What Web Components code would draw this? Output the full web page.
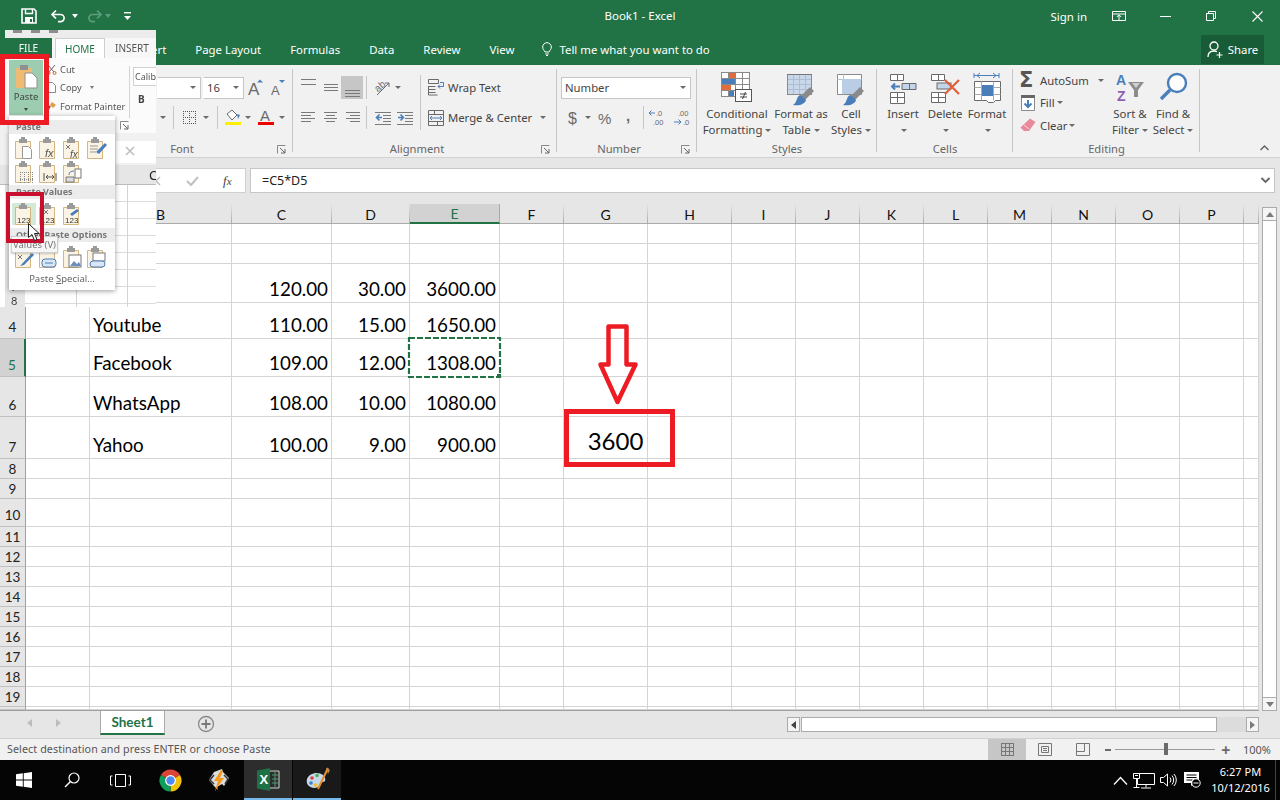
<!DOCTYPE html>
<html lang="en">
<head>
<meta charset="utf-8">
<title>Book1 - Excel</title>
<style>
  html, body { margin: 0; padding: 0; }
  body { width: 1280px; height: 800px; overflow: hidden; position: relative; background: #fff; font: 12px "Noto Sans", "Open Sans", sans-serif; color: #444; }
</style>
</head>
<body>
<xl-title></xl-title>
<xl-tabs></xl-tabs>
<xl-ribbon>
  <xl-group width="87"></xl-group>
  <xl-group width="206" label="Font" launcher>
    <xl-row end>
      <xl-combo w="44" style="margin-right:2px"></xl-combo>
      <xl-combo w="41" style="margin-right:1px">16</xl-combo>
      <xl-tool w="22" icon="grow"></xl-tool>
      <xl-tool w="22" icon="shrink" style="margin-right:4px"></xl-tool>
    </xl-row>
    <xl-row end>
      <xl-tool w="10" caret></xl-tool>
      <xl-sep style="margin:0 5px"></xl-sep>
      <xl-tool w="20" icon="borders"></xl-tool>
      <xl-tool w="10" caret style="margin:0 6px 0 2px"></xl-tool>
      <xl-sep style="margin-right:5px"></xl-sep>
      <xl-tool w="20" icon="fillcolor"></xl-tool>
      <xl-tool w="10" caret style="margin-right:3px"></xl-tool>
      <xl-tool w="20" icon="fontcolor"></xl-tool>
      <xl-tool w="11" caret style="margin-right:6px"></xl-tool>
    </xl-row>
  </xl-group>
  <xl-group width="264" label="Alignment" launcher row>
    <div style="width:123px;padding:4px 0 0 4px;box-sizing:border-box">
      <xl-row>
        <xl-tool w="22" icon="atop"></xl-tool>
        <xl-tool w="22" icon="amid"></xl-tool>
        <xl-tool w="22" icon="abot" active></xl-tool>
        <xl-sep style="margin:0 6px 0 3px"></xl-sep>
        <xl-tool w="20" icon="orient"></xl-tool>
        <xl-tool w="10" caret></xl-tool>
      </xl-row>
      <xl-row>
        <xl-tool w="22" icon="aleft"></xl-tool>
        <xl-tool w="22" icon="acenter"></xl-tool>
        <xl-tool w="22" icon="aright"></xl-tool>
        <xl-sep style="margin:0 5px 0 3px"></xl-sep>
        <xl-tool w="22" icon="outdent"></xl-tool>
        <xl-tool w="22" icon="indent"></xl-tool>
      </xl-row>
    </div>
    <xl-sep tall style="margin:10px 5px 0 4px"></xl-sep>
    <div style="padding-top:4px">
      <xl-row><xl-tool w="20" icon="wrap" style="margin-right:2px"></xl-tool><span>Wrap Text</span></xl-row>
      <xl-row><xl-tool w="20" icon="merge" style="margin-right:2px"></xl-tool><span>Merge &amp; Center</span><xl-tool w="10" caret style="margin-left:6px"></xl-tool></xl-row>
    </div>
  </xl-group>
  <xl-group width="140" label="Number" launcher>
    <xl-row style="padding-left:4px"><xl-combo w="130" text>Number</xl-combo></xl-row>
    <xl-row style="padding-left:6px">
      <xl-tool w="20" icon="dollar"></xl-tool>
      <xl-tool w="10" caret style="margin-right:3px"></xl-tool>
      <xl-tool w="20" icon="percent" style="margin-right:2px"></xl-tool>
      <xl-tool w="20" icon="comma"></xl-tool>
      <xl-sep style="margin:0 1px 0 5px"></xl-sep>
      <xl-tool w="24" icon="incdec" style="margin-right:1px"></xl-tool>
      <xl-tool w="24" icon="decdec"></xl-tool>
    </xl-row>
  </xl-group>
  <xl-group width="180" label="Styles" row pad="6">
    <xl-big w="68" icon="cond" caret>Conditional<br>Formatting</xl-big>
    <xl-big w="60" icon="table" caret>Format as<br>Table</xl-big>
    <xl-big w="40" icon="cellstyle" caret>Cell<br>Styles</xl-big>
  </xl-group>
  <xl-group width="136" label="Cells" row pad="5">
    <xl-big w="42" icon="insert" caret>Insert<br></xl-big>
    <xl-big w="42" icon="delete" caret>Delete<br></xl-big>
    <xl-big w="42" icon="format" caret>Format<br></xl-big>
  </xl-group>
  <xl-group width="187" label="Editing" row pad="5">
    <div style="width:90px;margin-top:4px">
      <xl-row slim><xl-tool w="20" icon="sum" style="margin-right:2px"></xl-tool><span>AutoSum</span><xl-tool w="10" caret style="margin-left:7px"></xl-tool></xl-row>
      <xl-row slim><xl-tool w="20" icon="fill" style="margin-right:2px"></xl-tool><span>Fill</span><xl-tool w="10" caret></xl-tool></xl-row>
      <xl-row slim><xl-tool w="20" icon="clear" style="margin-right:2px"></xl-tool><span>Clear</span><xl-tool w="10" caret></xl-tool></xl-row>
    </div>
    <xl-big w="44" icon="sort" caret>Sort &amp;<br>Filter</xl-big>
    <xl-big w="42" icon="find" caret>Find &amp;<br>Select</xl-big>
  </xl-group>
</xl-ribbon>
<xl-formula>=C5*D5</xl-formula>
<xl-sheet></xl-sheet>
<xl-sheetbar></xl-sheetbar>
<xl-status>Select destination and press ENTER or choose Paste</xl-status>
<xl-taskbar></xl-taskbar>
<xl-paste-shot></xl-paste-shot>
<xl-mark x="564" y="409" w="111" h="58" color="#ed1c24" size="5"><span>3600</span></xl-mark>
<xl-arrow></xl-arrow>
<xl-mark x="0" y="54" w="49" h="71" color="#ed1c24" size="5"></xl-mark>
<xl-mark x="6" y="192" w="38" h="51" color="#c8102e" size="4"></xl-mark>
<xl-cursor></xl-cursor>

<script>
const GREY = '#6a6a6a', BLUE = '#4a7ebb', LINE = '#7a7a7a';
const hl = (y, a, b, c) => `<path d="M${a} ${y}.5H${b}" stroke="${c || LINE}" fill="none"/>`;
const vt = (x, a, b, c) => `<path d="M${x}.5 ${a}V${b}" stroke="${c || LINE}" fill="none"/>`;
const tx = (x, y, s, size, fill, extra) => `<text x="${x}" y="${y}" font-size="${size}" fill="${fill}" font-family="Liberation Sans, sans-serif" ${extra || ''}>${s}</text>`;
const grid = (x, y, cols, rows, w, h, c) => {
  let out = '';
  for (let i = 0; i <= cols; i++) out += vt(x + i * w, y, y + rows * h + 1, c);
  for (let i = 0; i <= rows; i++) out += hl(y + i * h, x, x + cols * w + 1, c);
  return out;
};
const brush = (x, y) => `<path d="M${x + 17} ${y}l4 4-9 9-4-4z" fill="#8a8a8a"/><path d="M${x + 8} ${y + 8}l5 5c-1 4-6 6-13 5 3-2 3-4 4-6 1-3 2-4 4-4z" fill="#4a7ebb"/>`;
const clipboard = (inner) => `<path d="M3.500 4.500h15v17h-15z" fill="#fbf4e4" stroke="#d3b681"/><rect x="7" y="2" width="8" height="4" fill="#9a9a9a"/><rect x="9" y="0" width="4" height="3" fill="#9a9a9a"/>${inner || ''}`;

const ICONS = {
  save: [16, 16, `<path d="M1 1h12l2 2v12H1z" fill="none" stroke="#fff" stroke-width="1.6"/><path d="M4.5 1v4.5h7V1" fill="none" stroke="#fff" stroke-width="1.4"/><rect x="4" y="9" width="8" height="6" fill="#fff"/><rect x="9" y="11" width="2" height="3" fill="#217346"/>`],
  undo: [16, 14, `<path d="M6 1.5L2 5.5l4 4M2 5.5h8.5a3.6 3.6 0 0 1 0 7.2H8" fill="none" stroke="#fff" stroke-width="1.7"/>`],
  redo: [16, 14, `<path d="M10 1.5l4 4-4 4M14 5.5H5.5a3.6 3.6 0 0 0 0 7.2H8" fill="none" stroke="#5d9d7b" stroke-width="1.7"/>`],
  custom: [7, 8, `<rect width="7" height="1.4" fill="#fff"/><path d="M0 4h7L3.5 8z" fill="#fff"/>`],
  display: [14, 10, `<path d="M.5.5h13v9H.5zM.5 3h13" fill="none" stroke="#fff"/><path d="M7 9V4M4.8 6L7 3.8 9.2 6" fill="none" stroke="#fff"/>`],
  min: [11, 1, `<rect width="11" height="1" fill="#fff"/>`],
  restore: [10, 10, `<path d="M.5 2.5h7v7h-7zM2.5 2.5v-2h7v7h-2" fill="none" stroke="#fff"/>`],
  close: [11, 11, `<path d="M.5.5l10 10M10.5.5l-10 10" stroke="#fff" stroke-width="1.1"/>`],
  share: [16, 17, `<circle cx="7" cy="5" r="4" fill="none" stroke="#fff" stroke-width="1.3"/><path d="M1 16c0-4 2-6 6-6 1 0 2 .2 3 .6" fill="none" stroke="#fff" stroke-width="1.3"/><path d="M12.5 11v6M9.5 14h6" stroke="#fff" stroke-width="1.2"/>`],
  bulb: [10, 14, `<path d="M3 10C2 8 .7 7.4.7 5a4.3 4.3 0 0 1 8.6 0c0 2.4-1.3 3-2.3 5zM3.3 12h3.4M4 13.5h2" fill="none" stroke="#fff"/>`],
  grow: [18, 23, `${tx(1, 19, 'A', 17, GREY)}<path d="M10 6.5l3-3 3 3z" fill="${BLUE}"/>`],
  shrink: [18, 23, `${tx(2, 19, 'A', 13, GREY)}<path d="M10 4h6l-3 3z" fill="${BLUE}"/>`],
  borders: [14, 23, `<g stroke-dasharray="1 1">${grid(1, 5, 2, 2, 6, 6, '#555')}</g>`],
  fillcolor: [18, 23, `<path d="M3 8l5-4 5 5-5 5z" fill="#fff" stroke="${GREY}"/><path d="M13 8l3 1-2 4z" fill="${BLUE}"/><rect x="1" y="16" width="16" height="3" fill="#ffef00"/>`],
  fontcolor: [18, 23, `${tx(3, 15, 'A', 15, GREY)}<rect x="1" y="16" width="16" height="3" fill="#e00"/>`],
  atop: [15, 23, hl(3, 0, 15) + hl(8, 0, 15)],
  amid: [15, 23, hl(8, 1, 15) + hl(11, 1, 15) + hl(14, 1, 15)],
  abot: [15, 23, hl(14, 0, 15) + hl(17, 0, 15) + hl(20, 0, 15)],
  aleft: [15, 23, hl(6, 0, 14) + hl(9, 0, 10) + hl(12, 0, 14) + hl(15, 0, 10)],
  acenter: [15, 23, hl(6, 1, 14) + hl(9, 3, 12) + hl(12, 1, 14) + hl(15, 3, 12)],
  aright: [15, 23, hl(6, 1, 15) + hl(9, 5, 15) + hl(12, 1, 15) + hl(15, 5, 15)],
  orient: [18, 23, `${tx(1, 13, 'ab', 10, GREY, 'transform="rotate(-40 7 11)"')}<path d="M3 19L15 7M11 7h4v4" fill="none" stroke="${GREY}"/>`],
  outdent: [16, 23, `${hl(6, 0, 16)}${hl(9, 8, 16)}${hl(12, 8, 16)}${hl(15, 8, 16)}${hl(18, 0, 16)}<path d="M7 11.5H2M4.5 8.5l-3 3 3 3" fill="none" stroke="${BLUE}" stroke-width="1.6"/>`],
  indent: [16, 23, `${hl(6, 0, 16)}${hl(9, 8, 16)}${hl(12, 8, 16)}${hl(15, 8, 16)}${hl(18, 0, 16)}<path d="M1 11.5h5M3.5 8.5l3 3-3 3" fill="none" stroke="${BLUE}" stroke-width="1.6"/>`],
  wrap: [17, 17, `<path d="M.5.5h10v4H.5zM.5 7.5h7M.5 10.5h7M.5 13.5h7M.5 7v9h9" fill="none" stroke="${GREY}"/><path d="M12 3.5h3.5v4H10M12 5.5l-2 2 2 2" fill="none" stroke="${BLUE}"/>`],
  merge: [16, 16, `<path d="M.5.5h15v15H.5zM.5 4.5h15M.5 11.5h15M6.5.5v4M9.5 11.5v4" fill="none" stroke="${GREY}"/><path d="M2 8h12M4 6L2 8l2 2M12 6l2 2-2 2" fill="none" stroke="${BLUE}"/>`],
  dollar: [12, 23, tx(1, 18, '$', 16, GREY)],
  percent: [16, 23, tx(0, 18, '%', 15, GREY)],
  comma: [10, 23, tx(3, 15, ',', 15, GREY, 'font-weight="700"')],
  incdec: [18, 23, `${tx(8, 10, '.0', 7.500, GREY)}${tx(5, 19, '.00', 7.500, GREY)}<path d="M7 7H1M3.500 4.500L1 7l2.500 2.500" fill="none" stroke="${BLUE}"/>`],
  decdec: [18, 23, `${tx(5, 10, '.00', 7.500, GREY)}${tx(10, 19, '.0', 7.500, GREY)}<path d="M1 16h7M5.500 13.500L8 16l-2.500 2.500" fill="none" stroke="${BLUE}"/>`],
  cond: [32, 31, `<path d="M.5.5h27v24H.5z" fill="#fff"/>${grid(0, 0, 4, 4, 7, 6, '#8a8a8a')}<rect x="8" y="1" width="6" height="5" fill="#e06b3d"/><rect x="1" y="7" width="13" height="5" fill="${BLUE}"/><rect x="1" y="13" width="9" height="5" fill="#e06b3d"/><rect x="8" y="19" width="5" height="5" fill="${BLUE}"/><rect x="14.5" y="17.5" width="16" height="12" fill="#fff" stroke="#555"/><path d="M19 22h7M19 25h7M24.500 20l-3 7" stroke="#444" fill="none"/>`],
  table: [30, 32, `${grid(1, 2, 4, 4, 6, 5, '#8a8a8a')}<rect x="2" y="3" width="23" height="19" fill="#b9cde5" opacity=".75"/>${hl(2, 1, 26, '#777')}${brush(7, 15)}`],
  cellstyle: [30, 32, `<path d="M1.500 2.500h24v20h-24z" fill="#fff" stroke="#8a8a8a"/><path d="M1.500 7.500h24M7.500 2.500v20" stroke="#c0c0c0" fill="none"/><rect x="6" y="7" width="19" height="15" fill="#b9cde5"/>${brush(7, 15)}`],
  insert: [28, 29, `<path d="M1.500 1.500h13v6h-13zM8.500 1.500v6M1.500 19.500h14v11h-14z" fill="#fff" stroke="${GREY}"/><path d="M1.500 24.500h14M8.500 19.500v10" stroke="${GREY}"/><path d="M13 10.500h14v6H13zM20.500 10.500v6" fill="#c3d5ea" stroke="${GREY}"/><path d="M11 13.500H3M6 10.500l-3 3 3 3" fill="none" stroke="${BLUE}" stroke-width="2"/>`],
  delete: [30, 29, `<path d="M1.500 1.500h13v6h-13zM8.500 1.500v6M1.500 19.500h14v10h-14zM1.500 24.500h14M8.500 19.500v10" fill="#fff" stroke="${GREY}"/><rect x="7" y="10" width="14" height="6" fill="#c3d5ea" stroke="${GREY}"/><path d="M15 7l14 14M29 7L15 21" stroke="#e0603a" stroke-width="2.200"/>`],
  format: [28, 31, `<path d="M1 3.500h25M1 1v5M26 1v5M4 3.500l3-2.500M4 3.500l3 2.500M23 3.500L20 1M23 3.500l-3 2.500" stroke="${BLUE}" fill="none"/><path d="M1.500 9.500h26v19h-5l-2 2h-5l-2-2h-12z" fill="#fff" stroke="${GREY}"/><path d="M1.500 15.500h26M1.500 22.500h26M8.500 9.500v19M20.500 9.500v19" stroke="#aaa" fill="none"/><rect x="9" y="13" width="11" height="11" fill="${BLUE}"/>`],
  sum: [20, 20, `<text x="1" y="17" font-size="21" fill="#555" font-weight="700" font-family="DejaVu Sans, sans-serif">Σ</text>`],
  fill: [15, 16, `<rect x="0" y="0" width="14" height="3" fill="#666"/><path d="M.5 .5h13v15H.5z" fill="#fff" stroke="#8a8a8a"/><rect x="0" y="0" width="14" height="3" fill="#666"/><path d="M7 5v7M3.500 8.500L7 12l3.500-3.500" fill="none" stroke="${BLUE}" stroke-width="2"/>`],
  clear: [16, 14, `<path d="M10 .5L15.500 4 9 13H4L.5 9.500z" fill="#e98a9a"/><path d="M3 6l6 5" stroke="#f6d4da"/>`],
  sort: [30, 31, `${tx(1, 13, 'A', 14, BLUE, 'font-weight="700"')}${tx(2, 29, 'Z', 14, '#8d5fb3', 'font-weight="700"')}<path d="M13 10h16l-6 8v7h-4v-7z" fill="#8c8c8c"/><path d="M17 11h8l-4 5z" fill="#cfcfcf"/>`],
  find: [30, 31, `<circle cx="19" cy="11" r="9" fill="#fff" stroke="${BLUE}" stroke-width="2.400"/><path d="M12 18L3 27" stroke="${BLUE}" stroke-width="3.400"/>`],
  launcher: [9, 9, `<path d="M.5 .5h8M.5 .5v8" stroke="#8a8a8a" fill="none"/><path d="M3 3l5 5M8 4v4H4" stroke="#666" fill="none"/>`],
  collapse: [9, 6, `<path d="M.5 5L4.500 1 8.500 5" stroke="#666" fill="none" stroke-width="1.500"/>`],
  chevron: [9, 6, `<path d="M.5 1l4 4 4-4" stroke="#666" fill="none" stroke-width="1.800"/>`],
  check: [13, 11, `<path d="M1 6l4 4 7-8" stroke="#c0c0c0" fill="none" stroke-width="2"/>`],
  cross: [10, 10, `<path d="M1 1l8 8M9 1L1 9" stroke="#bdbdbd" stroke-width="1.500"/>`],
  plus: [18, 18, `<circle cx="9" cy="9" r="7.500" fill="none" stroke="#8a8a8a" stroke-width="1.300"/><path d="M9 4.500v9M4.500 9h9" stroke="#777" stroke-width="1.800"/>`],
  normal: [13, 13, grid(0, 0, 3, 3, 4, 4, '#777')],
  page: [14, 13, `<path d="M.5.5h13v12H.5z" fill="none" stroke="#777"/><path d="M3.500 3.500h7v6h-7zM5 5.500h4M5 7.500h4" fill="none" stroke="#777"/>`],
  pbreak: [14, 13, `<path d="M.5.5h13v12H.5zM.5 8.500h8v-8" fill="none" stroke="#777"/>`],
  win: [16, 16, `<path d="M0 2.300L6.800 1.300V7.600H0zM7.700 1.200L16 0V7.600H7.700zM0 8.400H6.800V14.700L0 13.700zM7.700 8.400H16V16L7.700 14.800z" fill="#fff"/>`],
  search: [16, 16, `<circle cx="10" cy="6" r="5" fill="none" stroke="#fff" stroke-width="1.200"/><path d="M6.500 9.500L1 15" stroke="#fff" stroke-width="1.400"/>`],
  taskview: [21, 13, `<path d="M5.500.5h10v12h-10zM2.500 2H.5v9h2M18.500 2h2v9h-2" fill="none" stroke="#fff"/>`],
  chrome: [23, 23, `<g transform="translate(-.5 -.5)"><path d="M12 12L2.470 6.500A11 11 0 0 1 21.530 6.500Z" fill="#db4437"/><path d="M12 12L21.530 6.500A11 11 0 0 1 12 23Z" fill="#f4c20d"/><path d="M12 12L12 23A11 11 0 0 1 2.470 6.500Z" fill="#0f9d58"/><circle cx="12" cy="12" r="5.400" fill="#fff"/><circle cx="12" cy="12" r="4.200" fill="#4c8bf5"/></g>`],
  winamp: [20, 23, `<path d="M5 3l8-3 1 3 6 6-5 8-2-2-5 3 1 3-4-4-5-6z" fill="#ddd"/><path d="M12 1L5 12h4l-3 10 9-13h-4l3-7z" fill="#f39a1e"/><path d="M5 6L1 11l4 4M15 6l4 4-3 5" fill="none" stroke="#333" stroke-width="1.500"/>`],
  excel: [23, 23, `<path d="M0 2.500L13 0V23L0 20.500z" fill="#1e7145"/><path d="M13 3h9v17h-9" fill="none" stroke="#c9d9d0"/><path d="M15 7h6M15 11h6M15 15h6M18 4v15" stroke="#4f9a72" fill="none"/>${tx(2.500, 16, 'X', 13, '#fff', 'font-weight="700"')}`],
  paint: [25, 25, `<path d="M2 12C4 6 13 4 18 8c3 3 3 7 0 7-3 0-3 3-5 5C8 23 0 19 2 12z" fill="#c6d9ea"/><circle cx="7" cy="11" r="1.800" fill="#d8423a"/><circle cx="12" cy="8.500" r="1.800" fill="#4cae4f"/><circle cx="6" cy="16" r="1.800" fill="#3d7fd1"/><circle cx="10.500" cy="18" r="1.800" fill="#f0c02f"/><path d="M23 1L13 22" stroke="#e58e2b" stroke-width="2"/><path d="M21 1l4 2-2 4z" fill="#b98a4c"/>`],
  up: [15, 9, `<path d="M1 8.500L7.500 1.500l6.500 7" stroke="#fff" fill="none" stroke-width="1.300"/>`],
  net: [23, 17, `<path d="M4.500 1.500h17v11h-17zM13 12.500v3M8 16h10" fill="none" stroke="#fff"/><path d="M.5 1.500h6v5h-6zM3.500 6.500v9M.5 15.500h6" fill="#000" stroke="#fff"/><path d="M2 3.500h3" stroke="#fff"/>`],
  vol: [16, 14, `<path d="M.5 4.500h3l4-3.500v12l-4-3.500h-3z" fill="none" stroke="#fff"/><path d="M10 4.500a4 4 0 0 1 0 5M12 2.500a7 7 0 0 1 0 9M14 1a9 9 0 0 1 0 12" fill="none" stroke="#fff"/>`],
  action: [17, 16, `<path d="M0 0h15v11h-4l-4 3v-3H0z" fill="#fff"/><path d="M2.500 3h10M2.500 5.500h10M2.500 8h6" stroke="#000"/><circle cx="12" cy="11" r="4.200" fill="#000" stroke="#fff"/><path d="M9.500 11h5" stroke="#fff"/>`],
};
const PASTE_ICONS = {
  p1: clipboard(`<path d="M10.500 9.500h6l3 3v9h-9z" fill="#fff" stroke="#999"/>`),
  p2: clipboard(tx(9, 20, 'fx', 11, '#555', 'font-style="italic"')),
  p3: clipboard(`<path d="M6 8l4 4M6 12l4-4" stroke="#777"/>${tx(10, 21, 'fx', 10, '#555', 'font-style="italic"')}`),
  p4: clipboard(`<path d="M6 9h8M6 12h8M6 15h6" stroke="#999"/><path d="M21 6l2 2-8 9-3-2z" fill="#4a7ebb"/>`),
  p5: clipboard(`<g stroke-dasharray="1 1">${grid(8, 11, 3, 3, 4, 3.500, '#888')}</g>`),
  p6: clipboard(`<path d="M8 12v8M20 12v8M10 16h8M12 14l-2 2 2 2M16 14l2 2-2 2" stroke="#555" fill="none"/>`),
  p7: clipboard(`<path d="M6 16h8v5H6z" fill="#ddd" stroke="#777"/><rect x="15" y="8" width="6" height="9" fill="#fff" stroke="#777"/><path d="M9 14c0-3 2-4 5-4" stroke="#4a7ebb" fill="none"/>`),
  v1: clipboard(tx(5, 20, '123', 8, '#333')),
  v2: clipboard(`<path d="M8 7l4 4M8 11l4-4" stroke="#777"/>${tx(5, 20, '123', 8, '#333')}`),
  v3: clipboard(`<path d="M17 6l2 2-7 5-2-2z" fill="#4a7ebb"/>${tx(5, 20, '123', 8, '#333')}`),
  o1: clipboard(`<path d="M6 9l4 4M6 13l4-4" stroke="#777"/><path d="M20 7l2 2-10 10-4 1z" fill="#4a7ebb"/>`),
  o2: clipboard(`<rect x="6" y="13" width="14" height="8" rx="3" fill="#dbe6f3" stroke="#4a7ebb"/><path d="M9 17h8" stroke="#4a7ebb"/>`),
  o3: clipboard(`<rect x="9" y="9" width="12" height="12" fill="#fff" stroke="#777"/><path d="M10 20l4-5 3 3 2-2 2 4z" fill="#6c8ebf"/>`),
  o4: clipboard(`<rect x="9" y="7" width="12" height="8" fill="#fff" stroke="#777"/><rect x="6" y="15" width="15" height="6" rx="3" fill="#dbe6f3" stroke="#4a7ebb"/>`),
};

class XlElement extends HTMLElement {
  connectedCallback() {
    if (!this.shadowRoot) this.attachShadow({ mode: 'open' });
    this.shadowRoot.innerHTML = this.render();
  }
  num(name, fallback) {
    return this.hasAttribute(name) ? Number(this.getAttribute(name)) : fallback;
  }
}

class XlIcon extends XlElement {
  render() {
    const name = this.getAttribute('name');
    const [w, h, body] = ICONS[name] || [22, 22, PASTE_ICONS[name]];
    const vb = ICONS[name] ? `0 0 ${w} ${h}` : '0 0 24 22';
    const dw = ICONS[name] ? w : 24;
    return `<style>:host{display:inline-flex;line-height:0}svg{overflow:visible}</style>
      <svg width="${dw}" height="${h}" viewBox="${vb}">${body}</svg>`;
  }
}

class XlTitle extends XlElement {
  render() {
    return `<style>
      :host{display:grid;grid-template-columns:1fr auto 1fr;height:35px;background:#217346;color:#fff;font-size:11.500px}
      .qat{display:flex;align-items:center;padding-left:21px;height:32px}
      .right{display:flex;justify-content:flex-end;align-items:center;height:32px}
      .btn{width:46px;height:32px;display:flex;align-items:center;justify-content:center}
      .in{margin-right:9px}
      .title{line-height:32px}
      .car{width:0;height:0;border:3px solid transparent;border-top:4px solid #fff;border-bottom:0}
      .dim{border-top-color:#5d9d7b}
    </style>
    <div class="qat">
      <xl-icon name="save" style="margin-right:13px"></xl-icon>
      <xl-icon name="undo" style="margin-right:6px"></xl-icon><span class="car" style="margin-right:9px"></span>
      <xl-icon name="redo" style="margin-right:2px"></xl-icon><span class="car dim" style="margin-right:13px"></span>
      <xl-icon name="custom"></xl-icon>
    </div>
    <div class="title">Book1 - Excel</div>
    <div class="right">
      <span class="in">Sign in</span>
      <span class="btn"><xl-icon name="display"></xl-icon></span>
      <span class="btn"><xl-icon name="min"></xl-icon></span>
      <span class="btn"><xl-icon name="restore"></xl-icon></span>
      <span class="btn"><xl-icon name="close"></xl-icon></span>
    </div>`;
  }
}

class XlTabs extends XlElement {
  render() {
    const tabs = ['ert', 'Page Layout', 'Formulas', 'Data', 'Review', 'View'];
    return `<style>
      :host{display:flex;align-items:center;height:30px;background:#217346;color:#fff;font-size:11.400px;padding-left:151px;box-sizing:border-box}
      span{margin-right:29px;padding-bottom:2px}
      .tell{display:flex;align-items:center;gap:7px;margin-left:-1px}
      .share{margin-left:auto;margin-right:16px;width:63px;height:29px;background:#185c37;display:flex;align-items:center;justify-content:center;gap:5px;margin-top:-1px;padding:0}
    </style>
    ${tabs.map(t => `<span>${t}</span>`).join('')}
    <span class="tell"><xl-icon name="bulb"></xl-icon>Tell me what you want to do</span>
    <span class="share"><xl-icon name="share"></xl-icon>Share</span>`;
  }
}

class XlRibbon extends XlElement {
  render() {
    return `<style>
      :host{display:flex;height:92px;background:#f1f1f1;border-bottom:1px solid #d2d2d2;position:relative;font-size:11.300px;color:#444}
      .up{position:absolute;right:11px;bottom:6px}
    </style><slot></slot><xl-icon class="up" name="collapse"></xl-icon>`;
  }
}

class XlGroup extends XlElement {
  render() {
    const isRow = this.hasAttribute('row');
    return `<style>
      :host{display:flex;flex-direction:column;width:${this.num('width', 100)}px;height:92px;position:relative;box-sizing:border-box;flex:none}
      :host::after{content:"";position:absolute;right:0;top:4px;bottom:5px;width:1px;background:#c6c6c6}
      .body{height:77px;display:${isRow ? 'flex' : 'block'};padding-left:${this.num('pad', 0)}px;padding-top:${isRow ? 0 : 4}px;box-sizing:border-box}
      .foot{display:flex;height:15px;line-height:13px;color:#666;font-size:11.200px}
      .label{flex:1;text-align:center}
      .launch{width:16px;display:flex;padding-top:3px;box-sizing:border-box}
    </style>
    <div class="body"><slot></slot></div>
    <div class="foot"><div class="label">${this.getAttribute('label') || ''}</div>
    ${this.hasAttribute('launcher') ? '<div class="launch"><xl-icon name="launcher"></xl-icon></div>' : ''}</div>`;
  }
}

class XlRow extends XlElement {
  render() {
    const slim = this.hasAttribute('slim');
    return `<style>
      :host{display:flex;align-items:center;height:${slim ? 22.500 : 23}px;margin-top:${slim ? 0 : 7}px;margin-bottom:${slim ? 0 : 1}px;justify-content:${this.hasAttribute('end') ? 'flex-end' : 'flex-start'}}
    </style><slot></slot>`;
  }
}

class XlSep extends XlElement {
  render() {
    return `<style>:host{display:block;flex:none;width:1px;height:${this.hasAttribute('tall') ? 55 : 23}px;background:#c6c6c6}</style>`;
  }
}

class XlTool extends XlElement {
  render() {
    const icon = this.getAttribute('icon');
    return `<style>
      :host{display:flex;flex:none;align-items:center;justify-content:center;width:${this.num('w', 20)}px;height:23px;background:${this.hasAttribute('active') ? '#c6c6c6' : 'transparent'}}
      .car{width:0;height:0;border:3px solid transparent;border-top:3.500px solid #6a6a6a;border-bottom:0}
    </style>${icon ? `<xl-icon name="${icon}"></xl-icon>` : ''}${this.hasAttribute('caret') ? '<span class="car"></span>' : ''}<slot></slot>`;
  }
}

class XlCombo extends XlElement {
  render() {
    return `<style>
      :host{display:flex;flex:none;align-items:center;width:${this.num('w', 40)}px;height:22px;box-sizing:border-box;background:#fff;border:1px solid #c6c6c6;border-left-color:${this.hasAttribute('text') ? '#c6c6c6' : '#fff'};padding:0 4px 0 3px;font-size:11.300px;color:#444}
      .t{flex:1}
      .car{width:0;height:0;border:3px solid transparent;border-top:3.500px solid #6a6a6a;border-bottom:0}
    </style><span class="t"><slot></slot></span><span class="car"></span>`;
  }
}

class XlBig extends XlElement {
  render() {
    return `<style>
      :host{display:flex;flex:none;flex-direction:column;align-items:center;width:${this.num('w', 42)}px;color:#444;font-size:11.400px}
      .ic{height:37px;margin-top:4px;display:flex;align-items:center;justify-content:center}
      .tx{text-align:center;line-height:16px;white-space:nowrap}
      .car{display:inline-block;vertical-align:middle;margin-left:3px;width:0;height:0;border:3px solid transparent;border-top:3.500px solid #6a6a6a;border-bottom:0}
    </style>
    <div class="ic"><xl-icon name="${this.getAttribute('icon')}"></xl-icon></div>
    <div class="tx"><slot></slot>${this.hasAttribute('caret') ? '<span class="car"></span>' : ''}</div>`;
  }
}

class XlFormula extends XlElement {
  render() {
    return `<style>
      :host{display:flex;align-items:flex-start;height:46px;background:#e6e6e6;padding:10px 5px 0 0;box-sizing:border-box;font-size:12px;color:#222}
      .tools{margin-left:140px;width:106px;height:25px;background:#fff;box-sizing:border-box;border:1px solid #d0d0d0;display:flex;align-items:center;flex:none;position:relative}
      .tools xl-icon{position:absolute}
      .fx{position:absolute;left:82px;font:italic 13px "Liberation Serif",serif;color:#444}
      .fx b{font-weight:400;font-size:11px}
      .in{margin-left:4px;flex:1;height:25px;box-sizing:border-box;background:#fff;border:1px solid #c6c6c6;padding-left:11px;line-height:23px;font-size:12.500px;position:relative}
      .ch{position:absolute;right:4px;top:8px}
    </style>
    <div class="tools">
      <xl-icon name="cross" style="left:10px"></xl-icon>
      <xl-icon name="check" style="left:45px"></xl-icon>
      <span class="fx">f<b>x</b></span>
    </div>
    <div class="in"><slot></slot><xl-icon class="ch" name="chevron"></xl-icon></div>`;
  }
}

class XlSheet extends XlElement {
  render() {
    const cols = [26, 64, 142, 100, 78, 90, 64, 84, 84, 64, 64, 64, 64, 64, 64, 64, 64, 15];
    const letters = ['', '', 'B', 'C', 'D', 'E', 'F', 'G', 'H', 'I', 'J', 'K', 'L', 'M', 'N', 'O', 'P', ''];
    const rows = [20, 20, 39, 36, 38, 40, 42, 20, 20, 28, 20, 20, 20, 20, 20, 20, 20, 20, 20, 3];
    const data = {
      3: { 3: '120.00', 4: '30.00', 5: '3600.00' },
      4: { 2: 'Youtube', 3: '110.00', 4: '15.00', 5: '1650.00' },
      5: { 2: 'Facebook', 3: '109.00', 4: '12.00', 5: '1308.00' },
      6: { 2: 'WhatsApp', 3: '108.00', 4: '10.00', 5: '1080.00' },
      7: { 2: 'Yahoo', 3: '100.00', 4: '9.00', 5: '900.00' },
    };
    let html = letters.map((l, i) => `<div class="ch${i === 5 ? ' sel' : ''}">${l}</div>`).join('');
    rows.forEach((h, r) => {
      const n = r + 1;
      html += `<div class="rh${n === 5 ? ' sel' : ''}${h > 20 ? ' tall' : ''}">${n >= 4 && n < 20 ? n : ''}</div>`;
      for (let c = 1; c < cols.length; c++) {
        const v = (data[n] || {})[c] || '';
        const ants = n === 5 && c === 5
          ? `<svg class="ants" width="93" height="41"><rect x="1" y="1" width="91" height="39" fill="none" stroke="#fff" stroke-width="2.200"/><rect x="1" y="1" width="91" height="39" fill="none" stroke="#217346" stroke-width="2.200" stroke-dasharray="6 2"/><rect x="89" y="37" width="4" height="4" fill="#217346"/></svg>` : '';
        html += `<div class="c${c === 2 ? ' l' : ''}${ants ? ' pos' : ''}">${ants}${v}</div>`;
      }
    });
    return `<style>
      :host{display:flex;height:507px;background:#e6e6e6;overflow:hidden;position:relative}
      .g{display:grid;flex:none;width:1259px;height:506px;overflow:hidden;grid-template-columns:${cols.map(c => c + 'px').join(' ')};grid-template-rows:20px ${rows.map(r => r + 'px').join(' ')};border-bottom:1px solid #9f9f9f;font-family:Lato,"Liberation Sans",sans-serif;background:#fff;color:#000}
      .g>div{box-sizing:border-box;min-width:0}
      .ch{background:#e6e6e6;border-right:1px solid;border-image:linear-gradient(#e6e6e6,#a9a9a9) 1;border-bottom:1px solid #9f9f9f;display:flex;align-items:center;justify-content:center;font-size:14px;color:#111;padding-top:1px}
      .ch.sel{background:#d2d2d2;color:#217346;border-bottom:2px solid #217346;border-image:none;border-right:1px solid #a9a9a9}
      .rh{background:#e6e6e6;border-right:1px solid #9f9f9f;border-bottom:1px solid #c0c0c0;display:flex;align-items:flex-end;justify-content:center;font-size:13.500px;color:#222;padding-bottom:1px;line-height:16px}
      .rh.tall{padding-bottom:3px}
      .rh.sel{background:#d2d2d2;color:#217346;border-right:2px solid #217346}
      .c{border-right:1px solid #d4d4d4;border-bottom:1px solid #d4d4d4;display:flex;align-items:flex-end;justify-content:flex-end;font-size:18.800px;line-height:22px;padding:0 3px 2px 0;white-space:nowrap}
      .c.l{justify-content:flex-start;padding:0 0 2px 3px}
      .pos{position:relative}
      .ants{position:absolute;left:-2px;top:-2px;overflow:visible;z-index:1}
      .v{margin:3px 0 0 3px;width:15px;height:504px;display:flex;flex-direction:column;box-sizing:border-box}
      .b{height:14px;background:#f5f5f5;border:1px solid #ababab;box-sizing:border-box;display:flex;align-items:center;justify-content:center;flex:none}
      .t{flex:1;background:#fff;border:solid #ababab;border-width:0 1px;box-sizing:border-box}
      .up{border:4px solid transparent;border-bottom:5px solid #7a7a7a;border-top:0}
      .dn{border:4px solid transparent;border-top:5px solid #7a7a7a;border-bottom:0}
    </style>
    <div class="g">${html}</div>
    <div class="v"><div class="b"><span class="up"></span></div><div class="t"></div><div class="b"><span class="dn"></span></div></div>`;
  }
}

class XlSheetbar extends XlElement {
  render() {
    return `<style>
      :host{display:flex;height:28px;background:#e6e6e6;border-bottom:1px solid #d0d0d0;box-sizing:border-box;align-items:flex-start;position:relative}
      .nav{width:29px;height:24px;display:flex;align-items:center;justify-content:center}
      .tl{border:4px solid transparent;border-right:5px solid #bdbdbd;border-left:0}
      .tr{border:4px solid transparent;border-left:5px solid #bdbdbd;border-right:0}
      .sheet{margin-left:27px;width:65px;height:24px;box-sizing:border-box;background:#fff;border:1px solid #ababab;border-top:0;border-bottom:2px solid #217346;color:#217346;font:700 13.500px Lato,"Liberation Sans",sans-serif;display:flex;align-items:center;justify-content:center}
      .add{margin:4px 0 0 32px;display:flex}
      .h{margin:6px 0 0 572px;display:flex;height:15px;width:472px}
      .btn{width:13px;height:15px;background:#f5f5f5;border:1px solid #ababab;box-sizing:border-box;display:flex;align-items:center;justify-content:center;flex:none}
      .ht{width:416px;background:#fff;border:1px solid #ababab;margin-left:1px;box-sizing:border-box}
      .hr{flex:1;background:#dcdcdc}
      .dl{border:4px solid transparent;border-right:5px solid #444;border-left:0}
      .dr{border:4px solid transparent;border-left:5px solid #7a7a7a;border-right:0}
    </style>
    <span class="nav" style="margin-left:15px"><span class="tl"></span></span>
    <span class="nav"><span class="tr"></span></span>
    <div class="sheet">Sheet1</div>
    <div class="add"><xl-icon name="plus"></xl-icon></div>
    <div class="h"><span class="btn"><span class="dl"></span></span><span class="ht"></span><span class="hr"></span><span class="btn"><span class="dr"></span></span></div>`;
  }
}

class XlStatus extends XlElement {
  render() {
    return `<style>
      :host{display:flex;align-items:center;height:21px;background:#f1f1f1;font-size:10.700px;color:#555;padding:0 9px 2px 7px;box-sizing:border-box;letter-spacing:.1px}
      .r{margin-left:auto;display:flex;align-items:center;height:21px;margin-bottom:-2px}
      .v{width:38px;height:21px;display:flex;align-items:center;justify-content:center}
      .on{background:#c6c6c6}
      .s{display:flex;align-items:center;width:100px;height:1px;background:#9a9a9a;position:relative;margin:0 1px}
      .th{position:absolute;left:49px;top:-6px;width:4px;height:12px;background:#6a6a6a}
      .m{width:6px;height:2px;background:#6a6a6a;margin:0 3px 0 3px}
      .p{margin:0 0 0 3px;font-size:16px;line-height:16px;width:14px;text-align:center;font-weight:700;color:#6a6a6a}
      .pc{width:38px;text-align:right;font-size:11px;letter-spacing:0}
    </style>
    <span><slot></slot></span>
    <div class="r">
      <span class="v on"><xl-icon name="normal"></xl-icon></span>
      <span class="v"><xl-icon name="page"></xl-icon></span>
      <span class="v"><xl-icon name="pbreak"></xl-icon></span>
      <span class="m"></span><span class="s"><span class="th"></span></span><span class="p">+</span>
      <span class="pc">100%</span>
    </div>`;
  }
}

class XlTaskbar extends XlElement {
  render() {
    const items = [
      ['win', ''], ['search', ''], ['taskview', 'margin-right:2px'], ['chrome', 'margin-right:1px'], ['winamp', 'margin-right:1px'],
    ];
    return `<style>
      :host{display:flex;height:40px;background:#050505;color:#fff;font-size:11px}
      .i{width:48px;height:40px;display:flex;align-items:center;justify-content:center;box-sizing:border-box;flex:none}
      .on{background:#2d2d2d;border-bottom:2px solid #76b9ed;margin-right:1px}
      .open{background:#191919;border-bottom:2px solid #76b9ed}
      .r{margin-left:auto;display:flex;align-items:center}
      .t{width:24px;display:flex;justify-content:center}
      .clock{width:67px;text-align:center;line-height:16px;margin-left:3px}
      .e{width:4px;height:40px;margin-left:1px;border-left:1px solid #444}
    </style>
    ${items.map(([n, st]) => `<span class="i" style="${st}"><xl-icon name="${n}"></xl-icon></span>`).join('')}
    <span class="i on"><xl-icon name="excel"></xl-icon></span>
    <span class="i open"><xl-icon name="paint"></xl-icon></span>
    <div class="r">
      <span class="t"><xl-icon name="up"></xl-icon></span>
      <span class="t"><xl-icon name="net"></xl-icon></span>
      <span class="t"><xl-icon name="vol"></xl-icon></span>
      <span class="t"><xl-icon name="action"></xl-icon></span>
      <div class="clock">6:27 PM<br>10/12/2016</div>
      <span class="e"></span>
    </div>`;
  }
}

// the pasted-in crop of the older window with the open paste menu
class XlPasteShot extends XlElement {
  render() {
    const row = (names, first) => `<div class="ir">${names.map((n, i) => `<span class="pi${first && i === 0 ? ' hot' : ''}"><xl-icon name="${n}"></xl-icon></span>`).join('')}</div>`;
    return `<style>
      :host{position:absolute;left:0;top:30px;width:156px;height:277px;display:flex;flex-direction:column;overflow:hidden;font-size:9.300px;color:#555;filter:blur(.25px)}
      .strip{height:8px;margin-left:5px;background:#ececec;flex:none;display:flex;gap:9px;padding-left:8px}
      .strip i{width:9px;height:3px;background:#8c8c8c}
      .tabs{height:20px;margin-left:5px;display:flex;background:#f7f7f7;flex:none;font-size:10px}
      .file{width:47px;background:#217346;color:#fff;display:flex;align-items:center;justify-content:center}
      .home{margin-left:3px;width:50px;background:#fff;border:1px solid #d0d0d0;border-bottom:0;box-sizing:border-box;color:#217346;display:flex;align-items:center;justify-content:center}
      .ins{margin-left:10px}
      .tabs .ins{align-self:center}
      .rib{height:75px;margin-left:5px;background:#fbfbfb;display:flex;flex:none;position:relative}
      .pb{margin:2px 0 0 4px;width:34px;height:55px;background:#9ccdb0;display:flex;flex-direction:column;align-items:center;color:#444;flex:none;font-size:9.600px}
      .pb svg{margin-top:5px}
      .pb .car{margin-top:5px;border:2.500px solid transparent;border-top:3px solid #444;border-bottom:0;width:0}
      .cc{width:86px;padding:2px 0 0 3px;box-sizing:border-box}
      .cc div{height:18.500px;display:flex;align-items:center;gap:3px;white-space:nowrap}
      .cc svg{flex:none}
      .calib{margin-left:3px;margin-top:9px;flex:1;height:19px;border:1px solid #d0d0d0;border-right:0;background:#fff;box-sizing:border-box;line-height:17px;padding-left:1px;font-size:9px;white-space:nowrap;position:relative}
      .vs{width:1px;height:52px;background:#d4d4d4;margin-top:8px;flex:none}
      .bold{position:absolute;left:133px;top:34px;font-weight:700;font-size:10px;color:#444}
      .ln{position:absolute;left:115px;top:63px}
      .fb{height:32px;background:#f1f1f1;flex:none;position:relative}
      .fb i{position:absolute;left:116px;top:8px;right:0;height:22px;background:#fff}
      .fb xl-icon{position:absolute;left:125px;top:13px}
      .hd{height:20px;background:#e6e6e6;flex:none;position:relative;border-bottom:1px solid #bbb;box-sizing:border-box;font-size:13px;color:#222}
      .hd span{position:absolute;left:149px;top:1px}
      .og{flex:1;position:relative;background-color:#fff;background-image:linear-gradient(90deg,#fff 0 5px,#e6e6e6 5px 25px,transparent 25px),linear-gradient(90deg,transparent 76px,#d4d4d4 76px,#d4d4d4 77px,transparent 77px,transparent 127px,#d4d4d4 127px,#d4d4d4 128px,transparent 128px),repeating-linear-gradient(#fff 0 16px,#dcdcdc 16px 17px)}
      .num{position:absolute;left:11px;color:#444;font:11px/11px Lato,sans-serif}
      .menu{position:absolute;left:9px;top:86px;width:106px;height:174px;background:#fff;box-shadow:0 1px 5px rgba(0,0,0,.4);display:flex;flex-direction:column;padding-top:4px;box-sizing:border-box;font-size:9.800px}
      .band{height:14px;background:#ececec;font-weight:700;color:#777;line-height:14px;padding-left:7px;flex:none;white-space:nowrap;font-size:9px}
      .ir{display:flex;height:24px;padding-left:3px;flex:none;align-items:center}
      .pi{width:24px;height:22px;display:flex;justify-content:center}
      .hot{background:#d3ead9}
      .sp{color:#666;text-align:center;margin-top:3px;font-size:9.500px}
      .sp u{text-decoration:underline}
      .tip{position:absolute;left:11px;top:206px;width:47px;height:17px;background:#f6f6f6;border:1px solid #cfcfcf;box-sizing:border-box;box-shadow:0 1px 2px rgba(0,0,0,.2);font-size:9.500px;color:#777;text-align:center;line-height:15px;white-space:nowrap}
    </style>
    <div class="strip"><i></i><i></i><i></i></div>
    <div class="tabs"><span class="file">FILE</span><span class="home">HOME</span><span class="ins">INSERT</span></div>
    <div class="rib">
      <div class="pb">
        <svg width="24" height="24" viewBox="0 0 24 24"><path d="M2 3h16v20H2z" fill="#efbb74"/><rect x="6" y="0" width="8" height="5" fill="#8f8f8f"/><path d="M11 8h7l5 5v10H11z" fill="#fff" stroke="#8f8f8f"/></svg>
        <span style="margin-top:1px">Paste</span><span class="car"></span>
      </div>
      <div class="cc">
        <div><svg width="11" height="11" viewBox="0 0 11 11"><path d="M2 1l6 7M9 1L3 8" stroke="#666" fill="none"/><circle cx="2.500" cy="9" r="1.500" fill="none" stroke="#c0703a"/><circle cx="8.500" cy="9" r="1.500" fill="none" stroke="#c0703a"/></svg>Cut</div>
        <div><svg width="11" height="11" viewBox="0 0 11 11"><path d="M1.500 .5h5l3 3v7h-8z" fill="#fff" stroke="#888"/></svg>Copy <span style="margin-left:5px;border:2.500px solid transparent;border-top:3px solid #777;border-bottom:0"></span></div>
        <div><svg width="11" height="11" viewBox="0 0 11 11"><path d="M6 1l4 3-3 3-3-3z" fill="#e0a040"/><path d="M4 5L1 10" stroke="#555" stroke-width="2"/></svg>Format Painter</div>
      </div>
      <span class="vs"></span>
      <div class="calib">Calib</div>
      <span class="bold">B</span>
      <xl-icon class="ln" name="launcher"></xl-icon>
    </div>
    <div class="fb"><i></i><xl-icon name="cross"></xl-icon></div>
    <div class="hd"><span>C</span></div>
    <div class="og"><span class="num" style="top:96px">7</span><span class="num" style="top:110px">8</span></div>
    <div class="menu">
      <div class="band">Paste</div>
      <div style="height:2px"></div>
      ${row(['p1', 'p2', 'p3', 'p4'])}
      ${row(['p5', 'p6', 'p7'])}
      <div style="height:1px"></div>
      <div class="band">Paste Values</div>
      <div style="height:3px"></div>
      ${row(['v1', 'v2', 'v3'], true)}
      <div style="height:2px"></div>
      <div class="band">Other Paste Options</div>
      <div style="height:3px"></div>
      ${row(['o1', 'o2', 'o3', 'o4'])}
      <div class="sp">Paste <u>S</u>pecial...</div>
    </div>
    <div class="tip">Values (V)</div>`;
  }
}

class XlMark extends XlElement {
  render() {
    return `<style>
      :host{position:absolute;left:${this.num('x', 0)}px;top:${this.num('y', 0)}px;width:${this.num('w', 10)}px;height:${this.num('h', 10)}px;box-sizing:border-box;border:${this.num('size', 4)}px solid ${this.getAttribute('color')};display:flex;align-items:center;justify-content:center;font:24px Lato,"Liberation Sans",sans-serif;color:#000;padding:5px 8px 0 0}
    </style><slot></slot>`;
  }
}

class XlArrow extends XlElement {
  render() {
    return `<style>:host{position:absolute;left:596px;top:322px;line-height:0}</style>
    <svg width="44" height="86" viewBox="0 0 44 86"><path d="M12.500 4.500h18v38h9L21.500 80 4.500 42.500h8z" fill="none" stroke="#ed1c24" stroke-width="4.500" stroke-linejoin="round"/></svg>`;
  }
}

class XlCursor extends XlElement {
  render() {
    return `<style>:host{position:absolute;left:28px;top:223px;line-height:0}</style>
    <svg width="12" height="18" viewBox="0 0 12 18"><path d="M.5.5v14l3.500-3 2.500 6 2.500-1-2.500-6h4.500z" fill="#fff" stroke="#222"/></svg>`;
  }
}

const TAGS = {
  'xl-icon': XlIcon, 'xl-title': XlTitle, 'xl-tabs': XlTabs, 'xl-ribbon': XlRibbon, 'xl-group': XlGroup,
  'xl-row': XlRow, 'xl-sep': XlSep, 'xl-tool': XlTool, 'xl-combo': XlCombo, 'xl-big': XlBig,
  'xl-formula': XlFormula, 'xl-sheet': XlSheet, 'xl-sheetbar': XlSheetbar, 'xl-status': XlStatus,
  'xl-taskbar': XlTaskbar, 'xl-paste-shot': XlPasteShot, 'xl-mark': XlMark, 'xl-arrow': XlArrow, 'xl-cursor': XlCursor,
};
Object.keys(TAGS).forEach(tag => customElements.define(tag, TAGS[tag]));
</script>
</body>
</html>
